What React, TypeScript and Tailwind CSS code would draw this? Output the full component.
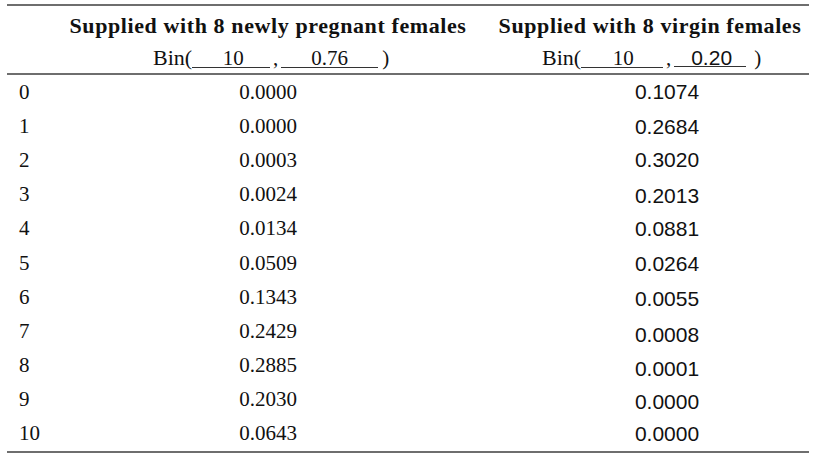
import React from "react";

const rows: { k: string; a: string; b: string; bc: string }[] = [
  { k: "0", a: "0.0000", b: "0.1074", bc: "pb-[2px]" },
  { k: "1", a: "0.0000", b: "0.2684", bc: "" },
  { k: "2", a: "0.0003", b: "0.3020", bc: "pb-[1px]" },
  { k: "3", a: "0.0024", b: "0.2013", bc: "pt-[2px]" },
  { k: "4", a: "0.0134", b: "0.0881", bc: "" },
  { k: "5", a: "0.0509", b: "0.0264", bc: "" },
  { k: "6", a: "0.1343", b: "0.0055", bc: "pt-[2px]" },
  { k: "7", a: "0.2429", b: "0.0008", bc: "pt-[6px]" },
  { k: "8", a: "0.2885", b: "0.0001", bc: "pt-[6px]" },
  { k: "9", a: "0.2030", b: "0.0000", bc: "pt-[4px]" },
  { k: "10", a: "0.0643", b: "0.0000", bc: "" },
];

const serif = "font-['Liberation_Serif',serif]";
const sans = "font-['Liberation_Sans',Arial,sans-serif]";

export default function App() {
  return (
    <div className={`w-[826px] h-[462px] bg-white text-[#111] overflow-hidden ${serif}`}>
      <div className="ml-[7px] mt-[4px] w-[802px] border-t-2 border-b-2 border-[#6e6e6e]">
        {/* header row 1 */}
        <div className="flex h-[37px] items-center pt-[1px]">
          <div className="w-[55px] shrink-0" />
          <div className="w-[412px] shrink-0 text-center text-[22px] font-bold tracking-[0.6px] whitespace-nowrap">
            Supplied with 8 newly pregnant females
          </div>
          <div className="w-[352px] shrink-0 text-center text-[22px] font-bold tracking-[0.6px] whitespace-nowrap">
            Supplied with 8 virgin females
          </div>
        </div>
        {/* header row 2 */}
        <div className="flex h-[32px] items-center border-b-2 border-[#6e6e6e] text-[21px]">
          <div className="w-[146px] shrink-0" />
          <div className="flex items-baseline w-[389px] shrink-0">
            <span className="text-[22px]">Bin(</span>
            <span className="inline-block w-[78px] border-b border-[#333] leading-[17px] text-center pl-[4px]">10</span>
            <span className="w-[11px] text-center">,</span>
            <span className="inline-block w-[97px] border-b border-[#333] leading-[17px] text-center">0.76</span>
            <span className="ml-[4px]">)</span>
          </div>
          <div className="flex items-baseline">
            <span className="text-[22px]">Bin(</span>
            <span className="inline-block w-[82px] border-b border-[#333] leading-[17px] text-center pl-[2px]">10</span>
            <span className="w-[11px] text-center">,</span>
            <span className={`inline-block w-[72px] border-b border-[#333] leading-[17px] text-center pl-[3px] ${sans}`}>0.20</span>
            <span className="ml-[8px]">)</span>
          </div>
        </div>
        {/* body */}
        {rows.map((r) => (
          <div key={r.k} className="flex h-[34.2px] items-center">
            <div className="w-[55px] shrink-0 pl-[12px] text-[21px] leading-none">{r.k}</div>
            <div className="w-[412px] shrink-0 text-center text-[21px] leading-none">{r.a}</div>
            <div className={`w-[352px] shrink-0 pl-[34px] text-center text-[21px] leading-none ${sans} ${r.bc}`}>{r.b}</div>
          </div>
        ))}
      </div>
    </div>
  );
}
